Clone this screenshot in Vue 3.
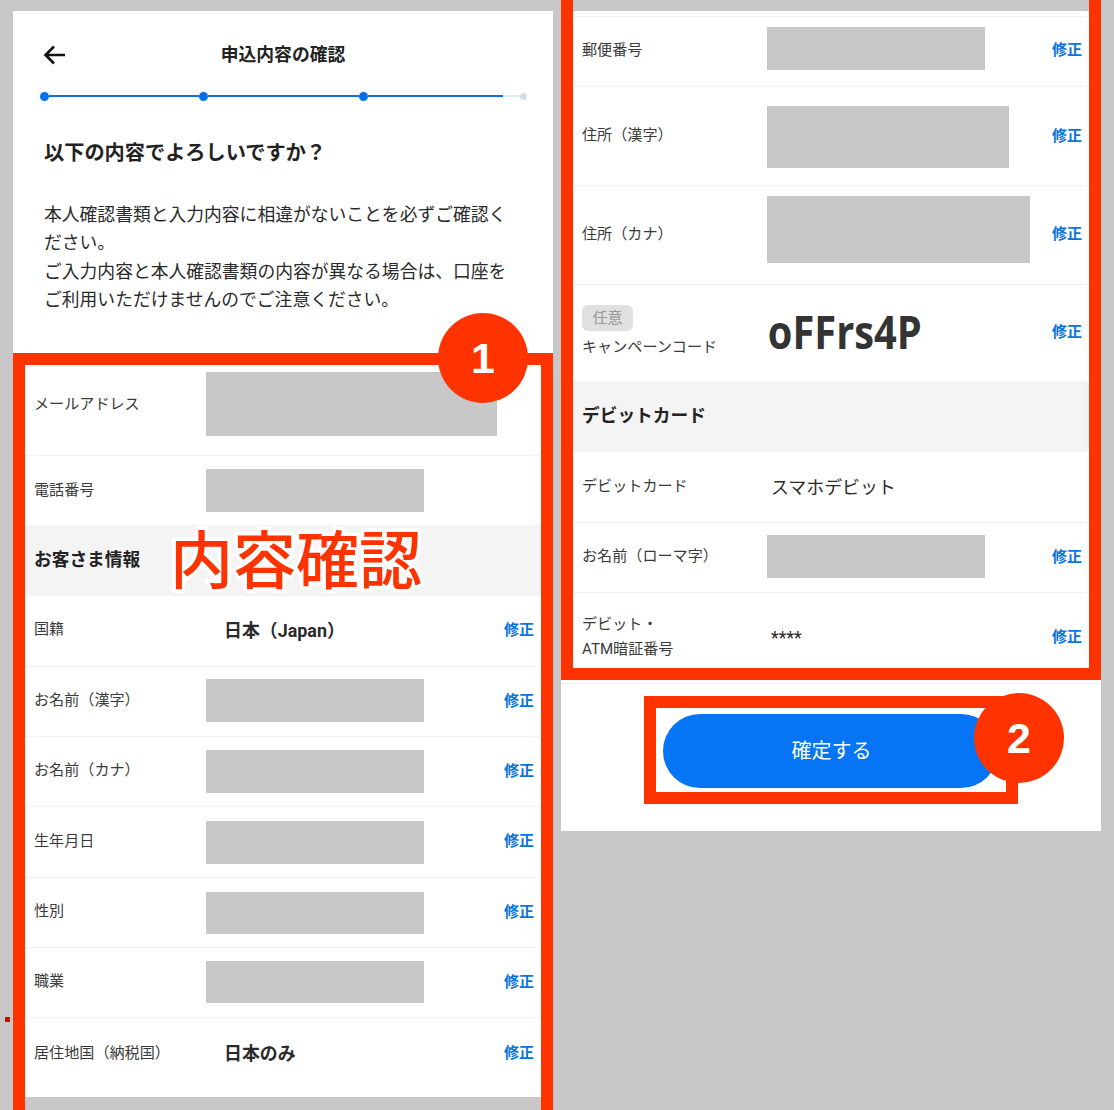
<script setup>
const rowStyle = (r) => {
  const d = 2 * r.c - r.h
  return {
    height: r.h + 'px',
    paddingTop: Math.max(0, d) + 'px',
    paddingBottom: Math.max(0, -d) + 'px'
  }
}
const maskStyle = (r) => ({
  width: r.w + 'px',
  height: r.mh + 'px',
  marginTop: r.top - Math.max(0, 2 * r.c - r.h) + 'px'
})

const leftRows = [
  { label: 'メールアドレス', h: 91, c: 39, top: 7, mh: 64, w: 291 },
  { label: '電話番号', h: 69, c: 33, top: 13, mh: 43, w: 218, last: true },
  { section: 'お客さま情報', h: 71 },
  { label: '国籍', h: 71, c: 33, value: '日本（Japan）', strong: true, fix: true },
  { label: 'お名前（漢字）', h: 70, c: 33, top: 12, mh: 43, w: 218, fix: true },
  { label: 'お名前（カナ）', h: 70, c: 33, top: 13, mh: 43, w: 218, fix: true },
  { label: '生年月日', h: 71, c: 33.5, top: 14, mh: 43, w: 218, fix: true },
  { label: '性別', h: 70, c: 33, top: 14, mh: 42, w: 218, fix: true },
  { label: '職業', h: 70, c: 33, top: 13, mh: 42, w: 218, fix: true },
  { label: '居住地国（納税国）', h: 79, c: 34, value: '日本のみ', strong: true, fix: true, last: true }
]

const rightTop = [
  { label: '郵便番号', h: 70, c: 32.5, top: 10, mh: 43, w: 218, fix: true },
  { label: '住所（漢字）', h: 99, c: 48, top: 19, mh: 62, w: 242, fix: true },
  { label: '住所（カナ）', h: 99, c: 47.5, top: 10, mh: 67, w: 263, fix: true }
]

const rightBottom = [
  { label: 'デビットカード', h: 71, c: 34, value: 'スマホデビット' },
  { label: 'お名前（ローマ字）', h: 70, c: 33, top: 12, mh: 43, w: 218, fix: true }
]
</script>

<template>
  <div class="page">
    <div class="column left-column">
      <header class="topbar">
        <svg class="back" width="22" height="20" viewBox="0 0 22 20" fill="none" stroke="#111" stroke-width="2.6">
          <path d="M22 10H3M11 1.5L2.5 10l8.5 8.5" />
        </svg>
        <h1 class="title">申込内容の確認</h1>
      </header>

      <div class="progress">
        <span class="dot"></span><span class="line seg1"></span>
        <span class="dot"></span><span class="line seg2"></span>
        <span class="dot"></span><span class="line seg3"></span><span class="line rest"></span>
        <span class="dot end"></span>
      </div>

      <h2 class="heading">以下の内容でよろしいですか？</h2>
      <p class="lead">本人確認書類と入力内容に相違がないことを必ずご確認ください。<br />ご入力内容と本人確認書類の内容が異なる場合は、口座をご利用いただけませんのでご注意ください。</p>

      <section class="frame frame-left">
        <template v-for="r in leftRows" :key="r.label || r.section">
          <div v-if="r.section" class="section-row">{{ r.section }}</div>
          <div v-else class="row" :class="{ last: r.last }" :style="rowStyle(r)">
            <span class="label">{{ r.label }}</span>
            <span v-if="r.mh" class="mask" :style="maskStyle(r)"></span>
            <span v-else class="value" :class="{ strong: r.strong }">{{ r.value }}</span>
            <a v-if="r.fix" class="fix">修正</a>
          </div>
        </template>
      </section>
    </div>

    <div class="column right-column">
      <section class="frame frame-right">
        <div class="stub"></div>
        <div v-for="r in rightTop" :key="r.label" class="row" :style="rowStyle(r)">
          <span class="label">{{ r.label }}</span>
          <span class="mask" :style="maskStyle(r)"></span>
          <a class="fix">修正</a>
        </div>

        <div class="row campaign">
          <div class="label">
            <span class="optional">任意</span>
            <span class="campaign-label">キャンペーンコード</span>
          </div>
          <span class="code">oFFrs4P</span>
          <a class="fix">修正</a>
        </div>

        <div class="section-row">デビットカード</div>

        <div v-for="r in rightBottom" :key="r.label" class="row" :style="rowStyle(r)">
          <span class="label">{{ r.label }}</span>
          <span v-if="r.mh" class="mask" :style="maskStyle(r)"></span>
          <span v-else class="value">{{ r.value }}</span>
          <a v-if="r.fix" class="fix">修正</a>
        </div>

        <div class="row pin last">
          <span class="label pin-label">デビット・<br />ATM暗証番号</span>
          <span class="value">****</span>
          <a class="fix">修正</a>
        </div>
      </section>

      <footer class="footer">
        <div class="button-frame">
          <button class="confirm" type="button">確定する</button>
        </div>
      </footer>
    </div>

    <span class="marker"></span>
    <span class="callout">内容確認</span>
    <span class="badge badge-one">1</span>
    <span class="badge badge-two">2</span>
  </div>
</template>

<style scoped>
.page {
  position: relative;
  box-sizing: border-box;
  width: 1114px;
  height: 1110px;
  overflow: hidden;
  display: flex;
  gap: 8px;
  padding-left: 13px;
  background: #c8c8c8;
  font-family: Roboto, "Noto Sans CJK JP", sans-serif;
  color: #222;
}
.column {
  width: 540px;
  display: flex;
  flex-direction: column;
}
.left-column {
  margin-top: 11px;
  background: #fff;
}
.topbar {
  position: relative;
  height: 30px;
  margin-top: 28px;
  display: flex;
  justify-content: center;
  align-items: center;
}
.back {
  position: absolute;
  left: 30px;
  top: 6px;
}
.title {
  margin: 0;
  padding-top: 2px;
  font-size: 17.8px;
  line-height: 30px;
  font-weight: 700;
  color: #222;
}
.progress {
  display: flex;
  align-items: center;
  height: 10px;
  margin: 22px 0 0 26.5px;
}
.dot {
  width: 9px;
  height: 9px;
  border-radius: 50%;
  background: #0073ec;
  flex: none;
}
.dot.end {
  width: 7px;
  height: 7px;
  background: #d5dde6;
}
.line {
  height: 2px;
  background: #1070d8;
  flex: none;
}
.seg1 { width: 150px; }
.seg2 { width: 151px; }
.seg3 { width: 135.5px; }
.rest { width: 16.5px; background: #e2ebf5; }
.heading {
  margin: 37px 0 0 31px;
  font-size: 20.2px;
  line-height: 30px;
  font-weight: 700;
}
.lead {
  width: 470px;
  margin: 32.5px 0 38.5px 31px;
  font-size: 17.8px;
  line-height: 28.6px;
  color: #2a2a2a;
}
.frame {
  box-sizing: border-box;
  border: 12px solid #ff3300;
  background: #c8c8c8;
}
.frame-left {
  flex: 1;
  border-bottom: 0;
}
.frame-right {
  height: 680px;
  padding-top: 11px;
  border-top: 0;
}
.stub {
  height: 6px;
  background: #fff;
  border-bottom: 1px solid #f1f1f1;
  box-sizing: border-box;
}
.row {
  box-sizing: border-box;
  display: flex;
  align-items: center;
  background: #fff;
  border-bottom: 1px solid #f1f1f1;
  padding-left: 9px;
  padding-right: 7px;
}
.row.last {
  border-bottom: 0;
}
.label {
  flex: none;
  padding-top: 2px;
  font-size: 15.1px;
  line-height: 25px;
  color: #3a3a3a;
}
.frame-left .label { width: 172px; }
.frame-right .label { width: 185px; }
.mask {
  align-self: flex-start;
  flex: none;
  background: #c8c8c8;
}
.value {
  padding-top: 4px;
  font-size: 17.9px;
  line-height: 26px;
  color: #2a2a2a;
}
.frame-left .value { padding-left: 18px; }
.frame-right .value { padding-left: 4px; }
.value.strong { font-weight: 700; }
.fix {
  margin-left: auto;
  padding-top: 2px;
  font-size: 15px;
  line-height: 22px;
  font-weight: 700;
  color: #0a74dc;
}
.section-row {
  box-sizing: border-box;
  height: 71px;
  padding-left: 9px;
  padding-bottom: 6px;
  display: flex;
  align-items: center;
  background: #f4f4f4;
  font-size: 17.7px;
  font-weight: 700;
  color: #222;
}
.campaign {
  height: 96px;
  padding-bottom: 4px;
  border-bottom: 0;
}
.campaign .label {
  display: flex;
  flex-direction: column;
  align-items: flex-start;
}
.optional {
  width: 51px;
  height: 26px;
  border-radius: 6px;
  background: #e0e0e0;
  color: #999;
  font-size: 15px;
  line-height: 26px;
  text-align: center;
}
.campaign-label {
  margin-top: 3px;
  line-height: 26px;
}
.code {
  font-family: "Open Sans", sans-serif;
  font-size: 46px;
  font-weight: 700;
  line-height: 50px;
  color: #333;
  padding-left: 1px;
  transform: scaleX(0.865);
  transform-origin: left center;
  width: 0;
}
.pin {
  height: 75px;
  padding-top: 11px;
}
.pin-label {
  line-height: 25px;
}
.footer {
  margin-top: 3px;
  border-top: 1px solid #f1f1f1;
  padding: 12px 0 27px;
  display: flex;
  justify-content: center;
}
.right-column {
  align-self: flex-start;
  background: #fff;
}
.button-frame {
  box-sizing: border-box;
  width: 374px;
  height: 108px;
  border: 12px solid #ff3300;
  padding: 6px 8px 0 7px;
}
.confirm {
  display: block;
  width: 335px;
  height: 74px;
  border: 0;
  padding: 0 0 4px 2px;
  border-radius: 37px;
  background: #0575f5;
  color: #fff;
  font-family: inherit;
  font-size: 20px;
}
.marker {
  position: absolute;
  left: 5px;
  top: 1017px;
  width: 5px;
  height: 5px;
  background: #d80000;
}
.callout {
  position: absolute;
  left: 170px;
  top: 516px;
  font-size: 63px;
  line-height: 92px;
  font-weight: 500;
  color: #ff3300;
  -webkit-text-stroke: 7px #fff;
  paint-order: stroke fill;
  white-space: nowrap;
}
.badge {
  position: absolute;
  width: 90px;
  height: 90px;
  border-radius: 50%;
  background: #ff3300;
  color: #fff;
  font-family: "Liberation Sans", sans-serif;
  font-size: 43px;
  font-weight: 700;
  line-height: 90px;
  text-align: center;
}
.badge-one { left: 438px; top: 313px; }
.badge-two { left: 974px; top: 693px; }
</style>
